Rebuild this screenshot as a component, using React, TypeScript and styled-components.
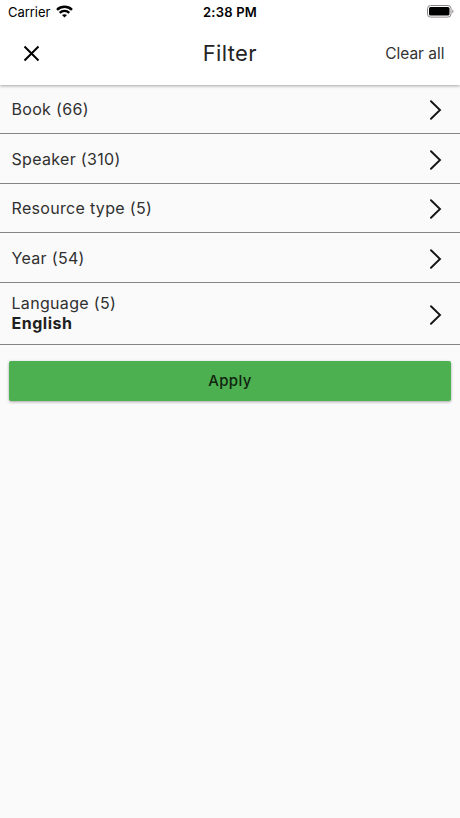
import React from "react";
import styled, { createGlobalStyle } from "styled-components";

const GlobalStyle = createGlobalStyle`
  * { box-sizing: border-box; }
  body { margin: 0; background: #fafafa; font-family: Inter, "Liberation Sans", sans-serif; }
  button { font: inherit; border: 0; padding: 0; background: none; color: inherit; cursor: pointer; }
`;

const Screen = styled.div`
  width: 100%;
  min-height: 818px;
  background: #fafafa;
  color: #242424;
`;

const Header = styled.header`
  position: relative;
  height: 85px;
  background: #fff;
  box-shadow: 0 1px 3px rgba(0, 0, 0, 0.34);
`;

const StatusBar = styled.div`
  display: grid;
  grid-template-columns: 1fr auto 1fr;
  align-items: center;
  height: 24px;
  padding: 0 6px 0 8px;
  color: #000;
`;

const Carrier = styled.div`
  display: flex;
  align-items: center;
  gap: 6px;
  font-size: 13px;
  letter-spacing: -0.05px;

  svg {
    margin-top: -2px;
  }
`;

const Clock = styled.div`
  margin-left: -2px;
  font-size: 13px;
  font-weight: 600;
  letter-spacing: 0.2px;
`;

const Battery = styled.svg`
  justify-self: end;
  margin-top: -1px;
`;

const Toolbar = styled.div`
  display: grid;
  grid-template-columns: 1fr auto 1fr;
  align-items: center;
  height: 59px;
  padding: 0 15.5px 0 23px;
`;

const CloseButton = styled.button`
  display: flex;
  width: 17px;
  height: 17px;
`;

const Title = styled.h1`
  margin: -2px 0 0 -8px;
  font-size: 22px;
  font-weight: 400;
  letter-spacing: 0.35px;
`;

const ClearButton = styled.button`
  justify-self: end;
  font-size: 15.5px;
  color: #333;
`;

const List = styled.div`
  display: flex;
  flex-direction: column;
`;

const Row = styled.div<{ $height: number }>`
  display: flex;
  align-items: center;
  justify-content: space-between;
  height: ${(p) => p.$height}px;
  padding: 0 18.5px 0 11.5px;
  border-bottom: 1px solid #858585;

  svg {
    margin-top: 2px;
  }
`;

const Label = styled.div<{ $raised?: boolean }>`
  margin-top: ${(p) => (p.$raised ? -2 : 0)}px;
  font-size: 16px;
  line-height: 20px;
  letter-spacing: 0.32px;
  color: #303030;
`;

const Selected = styled.div`
  font-size: 16px;
  font-weight: 700;
  letter-spacing: 0.5px;
  color: #202020;
`;

const ApplyButton = styled.button`
  display: block;
  width: calc(100% - 18px);
  height: 40px;
  margin: 16px 9px 0;
  padding-bottom: 2px;
  border-radius: 2px;
  background: #4caf50;
  box-shadow: 0 1px 3px rgba(0, 0, 0, 0.35);
  color: #10240f;
  font-size: 15px;
  font-weight: 500;
  letter-spacing: 0.4px;
`;

const filters = [
  { label: "Book (66)", height: 49 },
  { label: "Speaker (310)", height: 50 },
  { label: "Resource type (5)", height: 49 },
  { label: "Year (54)", height: 50 },
  { label: "Language (5)", selected: "English", height: 62 },
];

const WifiIcon = () => (
  <svg width="17" height="13" viewBox="0 0 17 13" fill="none" stroke="#000" strokeWidth="2.4">
    <path d="M1 4.8C5.2.8 11.8.8 16 4.8M3.7 7.8c2.7-2.6 6.9-2.6 9.6 0" />
    <path d="M8.5 12.6 6 10.1c1.3-1.2 3.7-1.2 5 0Z" fill="#000" stroke="none" />
  </svg>
);

const Chevron = () => (
  <svg width="12" height="20" viewBox="0 0 12 20" fill="none" stroke="#141414" strokeWidth="1.9">
    <path d="M1 1.2 10 10 1 18.8" strokeLinecap="round" />
  </svg>
);

export default function App() {
  return (
    <>
      <GlobalStyle />
      <Screen>
        <Header>
          <StatusBar>
            <Carrier>
              Carrier
              <WifiIcon />
            </Carrier>
            <Clock>2:38 PM</Clock>
            <Battery width="27" height="13" viewBox="0 0 27 13">
              <rect x=".5" y=".5" width="23.5" height="11.6" rx="3" fill="none" stroke="#8b858b" />
              <rect x="2" y="2" width="20.5" height="8.6" rx="1.6" />
              <path d="M25.3 4.5c1.6.7 1.6 3 0 3.7Z" fill="#8b858b" />
            </Battery>
          </StatusBar>
          <Toolbar>
            <CloseButton aria-label="Close">
              <svg width="17" height="17" viewBox="0 0 17 17" fill="none" stroke="#000" strokeWidth="2">
                <path d="m1.5 1.5 14 14m0-14-14 14" />
              </svg>
            </CloseButton>
            <Title>Filter</Title>
            <ClearButton>Clear all</ClearButton>
          </Toolbar>
        </Header>
        <List>
          {filters.map((f) => (
            <Row key={f.label} $height={f.height}>
              <Label $raised={Boolean(f.selected)}>
                {f.label}
                {f.selected && <Selected>{f.selected}</Selected>}
              </Label>
              <Chevron />
            </Row>
          ))}
        </List>
        <ApplyButton>Apply</ApplyButton>
      </Screen>
    </>
  );
}
